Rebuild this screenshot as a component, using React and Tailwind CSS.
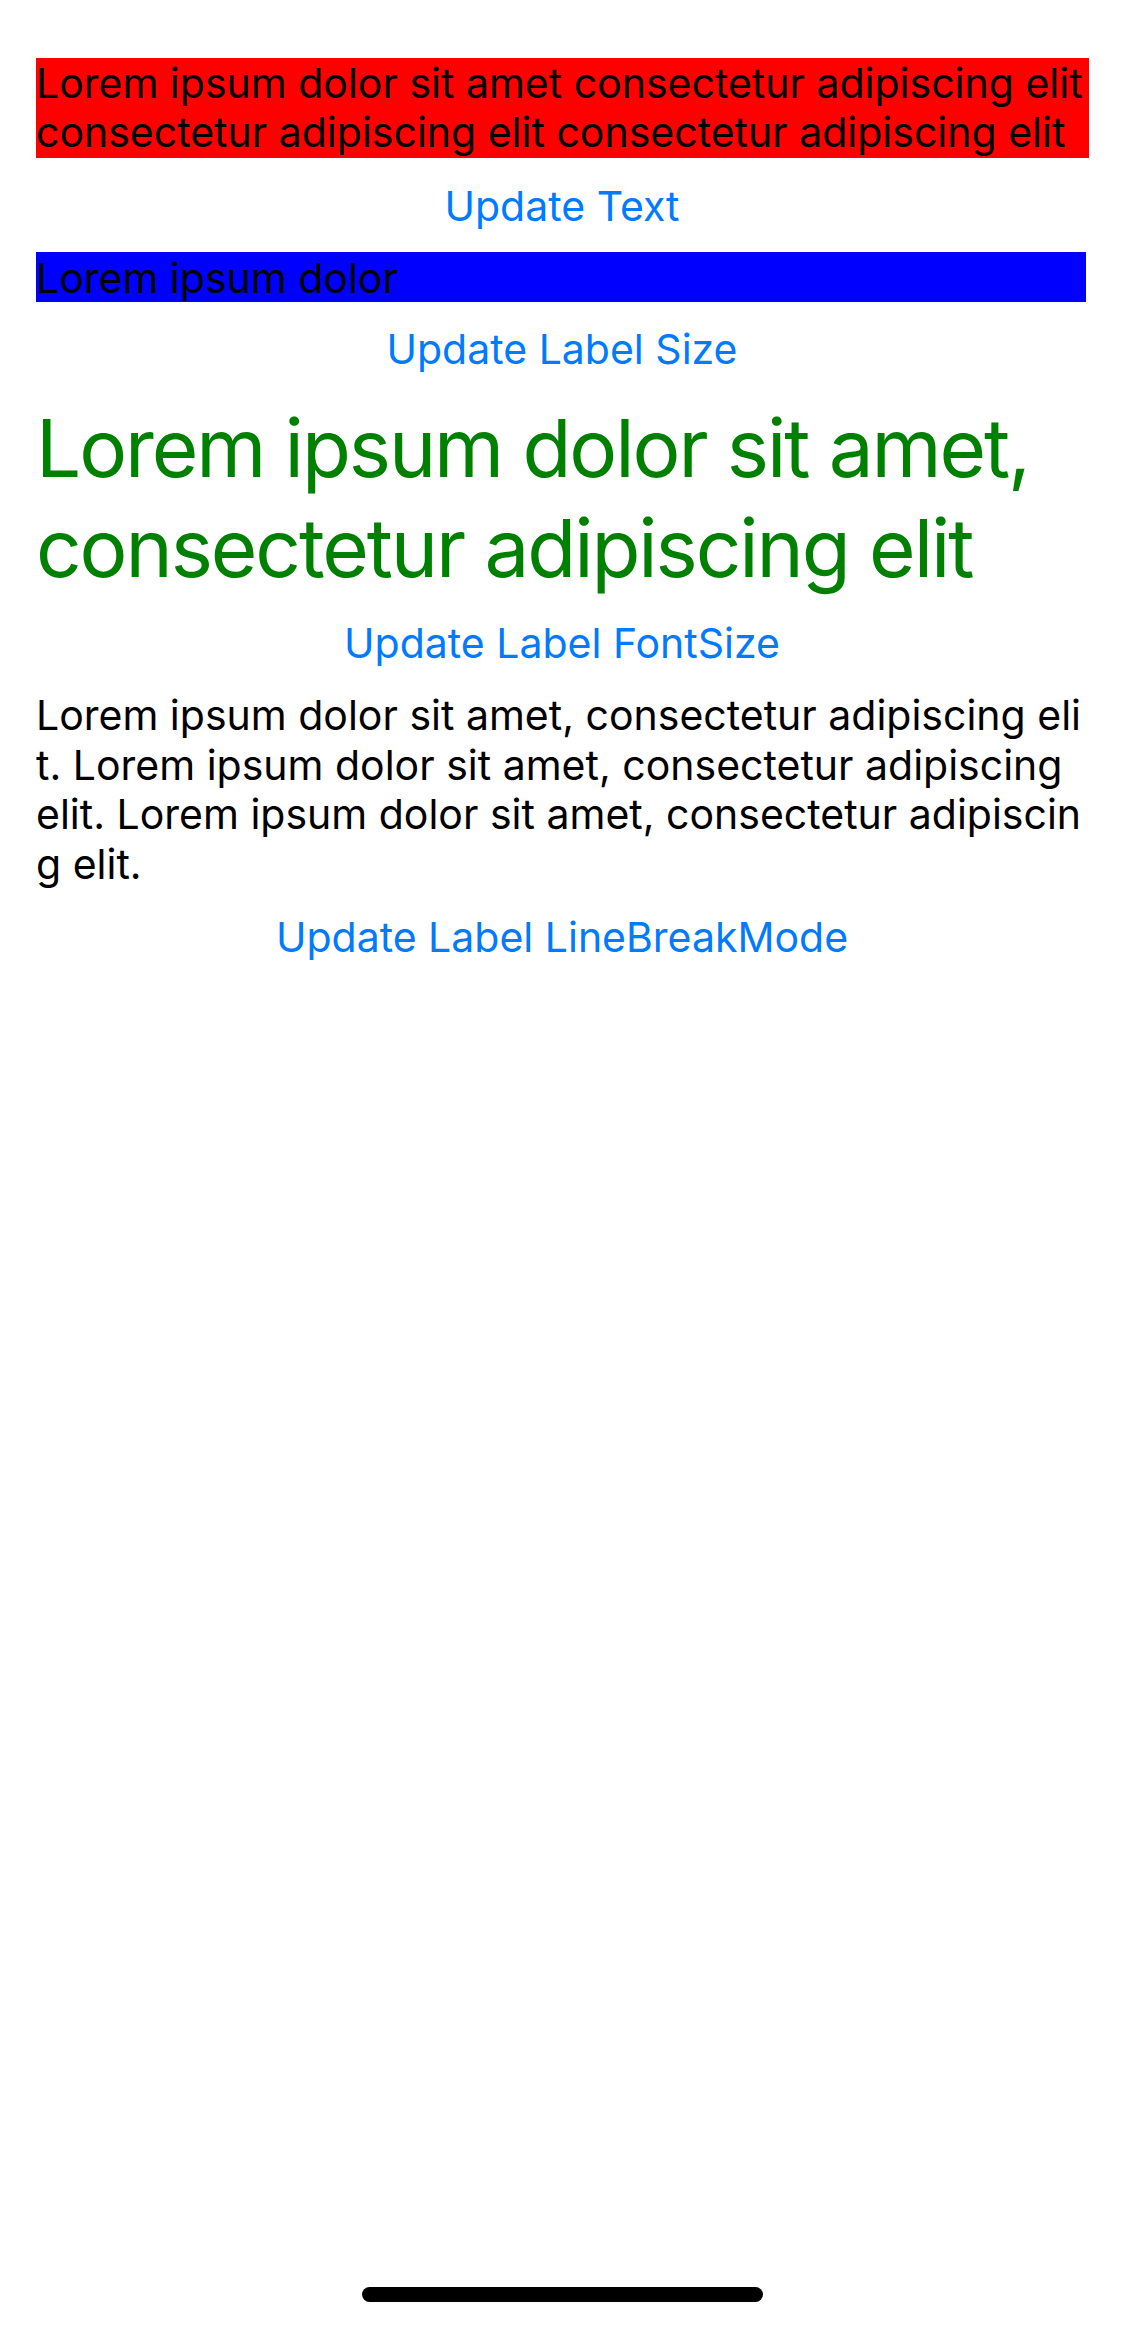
import React from "react";

const font = { fontFamily: "Inter, 'Noto Sans', sans-serif" };

export default function App() {
  return (
    <div
      className="flex h-[2326px] w-[1124px] flex-col bg-white text-black"
      style={font}
    >
      <div className="flex flex-col px-[36px] pt-[58px]">
        <div className="h-[100px] w-[1053px] bg-[#ff0000] pt-[1px] text-[41px] leading-[49px] whitespace-nowrap">
          <div>Lorem ipsum dolor sit amet consectetur adipiscing elit</div>
          <div>consectetur adipiscing elit consectetur adipiscing elit</div>
        </div>
        <div className="mt-[24px] text-center text-[41px] leading-[49px] text-[#007aff]">
          Update Text
        </div>
        <div className="mt-[21px] h-[50px] w-[1050px] bg-[#0000ff] pt-[1px] text-[41px] leading-[50px] whitespace-nowrap">
          Lorem ipsum dolor
        </div>
        <div className="mt-[23px] text-center text-[41px] leading-[49px] text-[#007aff]">
          Update Label Size
        </div>
        <div className="mt-[24px] text-[80px] leading-[100px] tracking-[-2.1px] text-[#008000] whitespace-nowrap">
          <div>Lorem ipsum dolor sit amet,</div>
          <div>consectetur adipiscing elit</div>
        </div>
        <div className="mt-[21px] text-center text-[41px] leading-[49px] text-[#007aff]">
          Update Label FontSize
        </div>
        <div className="mt-[23px] text-[41px] leading-[49.5px] whitespace-nowrap">
          <div>Lorem ipsum dolor sit amet, consectetur adipiscing eli</div>
          <div>t. Lorem ipsum dolor sit amet, consectetur adipiscing</div>
          <div>elit. Lorem ipsum dolor sit amet, consectetur adipiscin</div>
          <div>g elit.</div>
        </div>
        <div className="mt-[24px] text-center text-[41px] leading-[49px] text-[#007aff]">
          Update Label LineBreakMode
        </div>
      </div>
      <div className="mx-auto mt-auto mb-[24px] h-[15px] w-[401px] rounded-full bg-black" />
    </div>
  );
}
